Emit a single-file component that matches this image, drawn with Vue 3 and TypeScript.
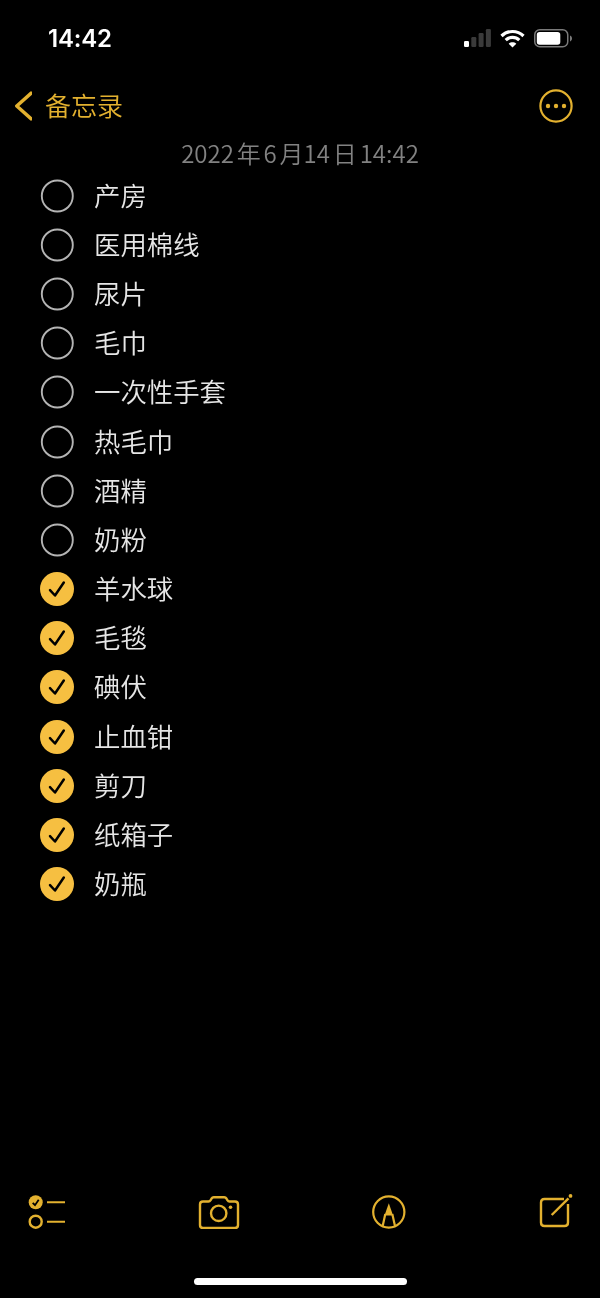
<script setup lang="ts">
interface Item {
  label: string;
  done: boolean;
}

const todo = ['产房', '医用棉线', '尿片', '毛巾', '一次性手套', '热毛巾', '酒精', '奶粉'];
const finished = ['羊水球', '毛毯', '碘伏', '止血钳', '剪刀', '纸箱子', '奶瓶'];

const items: Item[] = [
  ...todo.map((label) => ({ label, done: false })),
  ...finished.map((label) => ({ label, done: true })),
];
</script>

<template>
  <div class="screen">
    <header class="status-bar">
      <span class="time">14:42</span>
      <div class="status-icons">
        <svg class="signal" width="27" height="18" viewBox="0 0 27 18">
          <rect x="0" y="12" width="5" height="6" rx="1.2" fill="#fff" />
          <rect x="7.3" y="8" width="5" height="10" rx="1.2" fill="#3a3a3a" />
          <rect x="14.6" y="4" width="5" height="14" rx="1.2" fill="#3a3a3a" />
          <rect x="21.9" y="0" width="5" height="18" rx="1.2" fill="#3a3a3a" />
        </svg>
        <svg class="wifi" width="25" height="19" viewBox="0 0 25 19" fill="none" stroke="#fff" stroke-width="3.2">
          <path d="M1.5 7C7.600 1 17.400 1 23.500 7" />
          <path d="M5.700 11.200C9.500 7.500 15.500 7.500 19.300 11.200" />
          <path d="M12.500 18.500l-3.800-3.800c2.100-1.900 5.500-1.900 7.600 0z" fill="#fff" stroke="none" />
        </svg>
        <svg class="battery" width="38" height="19" viewBox="0 0 38 19">
          <rect x=".75" y=".75" width="33" height="17" rx="5" fill="none" stroke="#7a7a7a" stroke-width="1.5" />
          <rect x="2.800" y="3" width="23.500" height="12.800" rx="2.800" fill="#fff" />
          <path d="M36 6.500c1.200.4 2 1.600 2 3s-.8 2.600-2 3z" fill="#7a7a7a" />
        </svg>
      </div>
    </header>

    <nav class="nav">
      <div class="back">
        <svg width="18" height="30" viewBox="0 0 18 30" fill="none" stroke="#e3b12f" stroke-width="3.500" stroke-linecap="round" stroke-linejoin="round">
          <path d="M17 2.200 2.800 15 17 27.800" />
        </svg>
        <span class="back-label">备忘录</span>
      </div>
      <svg width="34" height="34" viewBox="0 0 34 34">
        <circle cx="17" cy="17" r="15.600" fill="none" stroke="#e3b12f" stroke-width="2.200" />
        <circle cx="9" cy="17" r="2.200" fill="#e3b12f" />
        <circle cx="17" cy="17" r="2.200" fill="#e3b12f" />
        <circle cx="25" cy="17" r="2.200" fill="#e3b12f" />
      </svg>
    </nav>

    <p class="date">2022 年 6 月14 日 14:42</p>

    <ul class="list">
      <li v-for="item in items" :key="item.label" class="row">
        <svg v-if="item.done" class="check" width="34" height="34" viewBox="0 0 34 34">
          <circle cx="17" cy="17" r="17" fill="#f6bf41" />
          <path d="M10 18.200 15 23.500 23.800 10.500" fill="none" stroke="#000" stroke-width="2.500" stroke-linecap="round" stroke-linejoin="round" />
        </svg>
        <svg v-else class="check" width="34" height="34" viewBox="0 0 34 34">
          <circle cx="17.300" cy="17" r="15.500" fill="none" stroke="#b4b4b4" stroke-width="1.900" />
        </svg>
        <span class="label">{{ item.label }}</span>
      </li>
    </ul>

    <footer class="toolbar">
      <svg width="40" height="36" viewBox="0 0 40 36" fill="none" stroke="#e3b12f" stroke-width="2.400">
        <circle cx="7.700" cy="8.300" r="7" fill="#e3b12f" stroke="none" />
        <path d="M4.700 8.800 7 11.200 10.700 5.800" stroke="#000" stroke-width="1.800" />
        <circle cx="7.700" cy="27.700" r="6" />
        <path d="M19 8.300h18M19 27.700h18" stroke-width="2" />
      </svg>
      <svg width="42" height="34" viewBox="0 0 42 34" fill="none" stroke="#e3b12f" stroke-width="2.400">
        <path d="M5 6.500h5.500c1 0 1.600-.5 2.100-1.300l1-1.700c.5-.8 1.100-1.200 2.100-1.200h10.600c1 0 1.600.4 2.100 1.200l1 1.700c.5.800 1.100 1.300 2.100 1.300H37c1.700 0 3 1.300 3 3V30c0 1.700-1.300 3-3 3H5c-1.700 0-3-1.300-3-3V9.500c0-1.700 1.300-3 3-3z" stroke-linejoin="round" />
        <circle cx="20.700" cy="18.300" r="7.700" />
        <circle cx="32.500" cy="12.300" r="1.800" fill="#e3b12f" stroke="none" />
      </svg>
      <svg width="34" height="34" viewBox="0 0 34 34" fill="none" stroke="#e3b12f" stroke-width="2.200">
        <circle cx="16.800" cy="17" r="15.600" />
        <path d="M10.700 31 13.300 19M23 31 20.300 19" />
        <path d="M16.800 8.300 12.500 20.500h8.600z" fill="#e3b12f" stroke="none" />
      </svg>
      <svg width="34" height="36" viewBox="0 0 34 36" fill="none" stroke="#e3b12f" stroke-width="2.400">
        <path d="M25 5H5.500C3.500 5 2 6.500 2 8.500v20C2 30.500 3.500 32 5.500 32h20c2 0 3.500-1.500 3.500-3.500V10" />
        <path d="M12.700 21 29.500 4.300" />
        <circle cx="31.500" cy="1.900" r="1.900" fill="#e3b12f" stroke="none" />
      </svg>
    </footer>

    <div class="home-indicator"></div>
  </div>
</template>

<style>
html,
body {
  background: #000;
}
</style>

<style scoped>
.screen {
  width: 600px;
  height: 1298px;
  display: flex;
  flex-direction: column;
  overflow: hidden;
  font-family: "Noto Sans CJK SC", "Noto Sans", sans-serif;
  will-change: transform;
}

.status-bar {
  height: 76px;
  padding: 0 28px 0 48px;
  display: flex;
  align-items: center;
  justify-content: space-between;
  box-sizing: border-box;
}

.time {
  color: #fff;
  font-family: Inter, "Liberation Sans", sans-serif;
  font-size: 24px;
  font-weight: 600;
  letter-spacing: -0.2px;
}

.status-icons {
  display: flex;
  align-items: center;
  gap: 9px;
}

.nav {
  height: 60px;
  padding: 0 27px 0 14px;
  display: flex;
  align-items: center;
  justify-content: space-between;
}

.back {
  display: flex;
  align-items: center;
  gap: 13px;
  color: #e3b12f;
  font-size: 26px;
  font-weight: 350;
}

.back-label {
  padding-bottom: 4px;
}

.date {
  margin: 0;
  height: 35px;
  line-height: 33px;
  text-align: center;
  color: #828282;
  font-size: 24px;
  font-weight: 350;
  word-spacing: -2.500px;
}

.list {
  margin: 0;
  padding: 0 0 0 40px;
  list-style: none;
}

.row {
  height: 49.200px;
  display: flex;
  align-items: center;
  gap: 20px;
}

.label {
  padding-bottom: 3px;
  color: #e6e6e6;
  font-size: 26.400px;
  font-weight: 350;
}

.toolbar {
  margin-top: auto;
  height: 42px;
  padding-left: 28px;
  display: grid;
  grid-template-columns: 170px 174px 167px auto;
  align-items: center;
}

.home-indicator {
  width: 213px;
  height: 7px;
  margin: 45px auto 13px;
  border-radius: 4px;
  background: #fff;
}
</style>
